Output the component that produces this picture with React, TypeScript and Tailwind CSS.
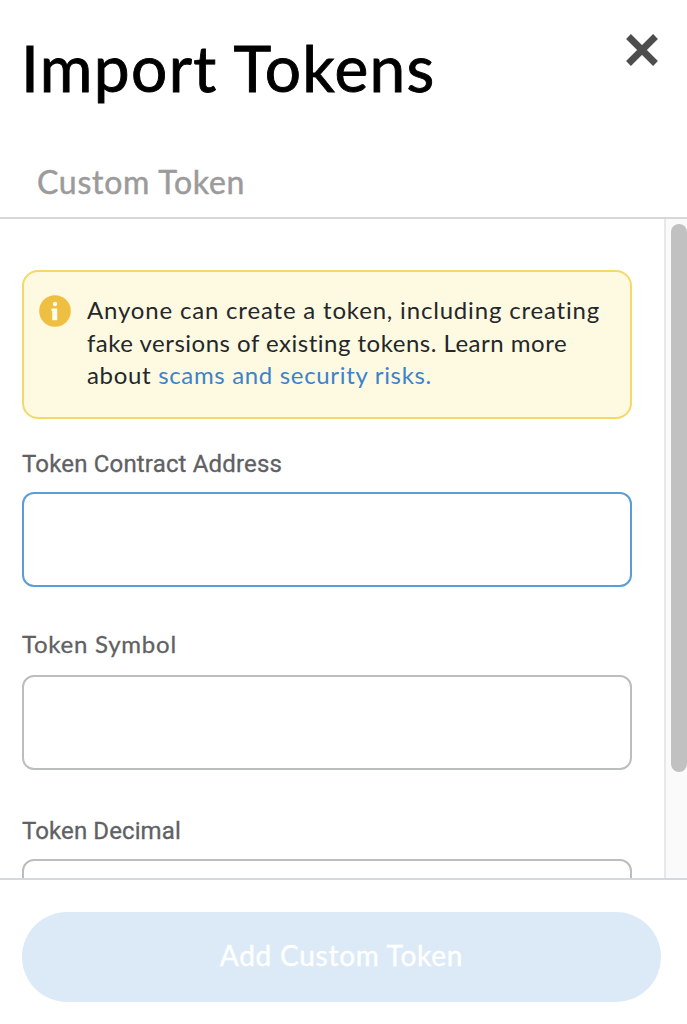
import type { ReactNode } from "react";

interface FieldProps {
  id: string;
  label: ReactNode;
  focused?: boolean;
}

function Field({ id, label, focused }: FieldProps) {
  return (
    <div className="flex flex-col">
      <label
        htmlFor={id}
        className="h-8 flex items-center whitespace-nowrap text-[#5f6163]"
      >
        {label}
      </label>
      <input
        id={id}
        className={`mt-3 h-[95px] w-full rounded-[12px] border-2 bg-white px-4 outline-none ${
          focused ? "border-[#5b9dd9]" : "border-[#bbbdbf]"
        }`}
      />
    </div>
  );
}

function Header() {
  return (
    <header className="h-[219px] shrink-0 border-b-2 border-[#d6d9dc] flex flex-col justify-between">
      <div className="flex items-start justify-between pt-[28px] pl-[21px] pr-[28px]">
        <h1 className="whitespace-nowrap text-[64px] leading-[80px] tracking-[1.35px] text-black [-webkit-text-stroke:0.9px_black]">
          Import Tokens
        </h1>
        <button aria-label="Close" className="mt-[5px]">
          <svg width="34" height="34" viewBox="0 0 34 34" fill="none">
            <path d="M3.5 3.5L30.5 30.5M30.5 3.5L3.5 30.5" stroke="#4d4d4d" strokeWidth="6.8" />
          </svg>
        </button>
      </div>
      <div className="pl-[37px] pb-[15px] whitespace-nowrap text-[32px] leading-[40px] tracking-[0.75px] text-[#9b9b9b] [-webkit-text-stroke:0.5px_#9b9b9b]">
        Custom Token
      </div>
    </header>
  );
}

function Warning() {
  return (
    <div className="flex h-[149px] rounded-[16px] border-2 border-[#f6d868] bg-[#fefae1] pl-[15px] pt-[23px]">
      <svg width="32" height="32" viewBox="0 0 32 32" className="shrink-0">
        <circle cx="16" cy="16" r="15.8" fill="#eebf41" />
        <circle cx="16" cy="9" r="2.2" fill="#fffdf0" />
        <path d="M13.2 13.4h5v11.8h-5v-9.4h-.8v-2.4z" fill="#fffdf0" />
      </svg>
      <p className="-mt-px ml-[16px] whitespace-nowrap text-[24px] leading-[32.5px] text-[#24272a]">
        <span className="block tracking-[0.82px]">Anyone can create a token, including creating</span>
        <span className="block tracking-[0.5px]">fake versions of existing tokens. Learn more</span>
        <span className="block tracking-[0.67px]">
          about <a className="text-[#3d82cc]">scams and security risks.</a>
        </span>
      </p>
    </div>
  );
}

export default function App() {
  return (
    <div className="h-[1024px] w-[687px] flex flex-col overflow-hidden bg-white font-['Lato',sans-serif]">
      <Header />

      <main className="flex min-h-0 flex-1">
        <div className="flex-1 overflow-hidden pl-[22px] pr-[32px] pt-[51px]">
          <Warning />
          <div className="mt-[29px] flex flex-col gap-[44.4px]">
            <Field
              id="address"
              focused
              label={
                <span className="font-['Roboto',sans-serif] text-[24px] tracking-[0.17px] [-webkit-text-stroke:0.3px_#5f6163]">
                  Token Contract Address
                </span>
              }
            />
            <Field
              id="symbol"
              label={
                <span className="-mt-1.5 text-[24px] tracking-[0.75px] [-webkit-text-stroke:0.3px_#5f6163]">
                  Token Symbol
                </span>
              }
            />
            <Field
              id="decimal"
              label={
                <span className="font-['Roboto',sans-serif] text-[24px] tracking-[0.1px] [-webkit-text-stroke:0.3px_#5f6163]">
                  Token Decimal
                </span>
              }
            />
          </div>
        </div>

        {/* scrollbar */}
        <div className="w-[23px] shrink-0 border-l-2 border-[#e8e8e8] bg-[#fafafa] pl-[5px] pt-[5px]">
          <div className="h-[548px] w-4 rounded-full bg-[#c1c1c1]" />
        </div>
      </main>

      <footer className="h-[146px] shrink-0 border-t-2 border-[#d6d9dc] pl-[22px] pr-[26px] pt-[32px]">
        <button
          disabled
          className="flex h-[90px] w-full items-center justify-center whitespace-nowrap rounded-full bg-[#dceaf7] pb-1 text-[28px] tracking-[0.75px] text-white [-webkit-text-stroke:0.4px_white]"
        >
          Add Custom Token
        </button>
      </footer>
    </div>
  );
}
